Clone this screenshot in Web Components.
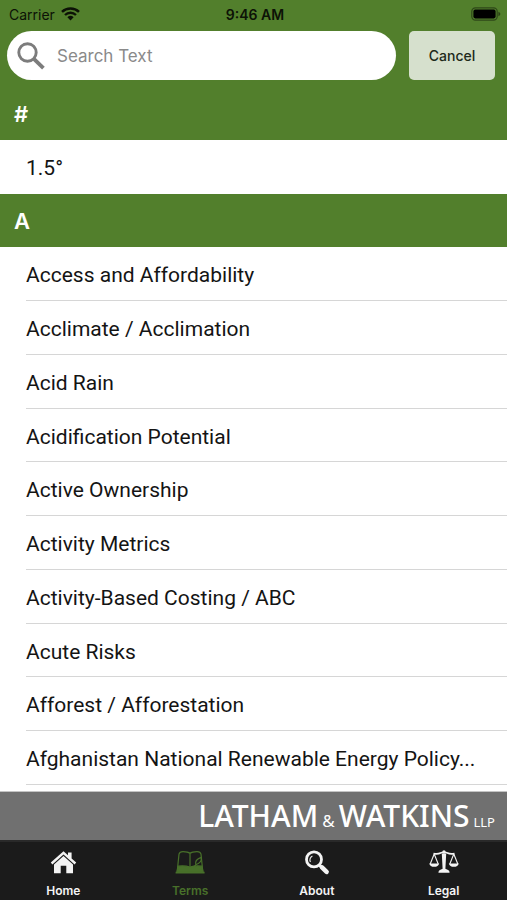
<!DOCTYPE html>
<html lang="en">
<head>
<meta charset="utf-8">
<meta name="viewport" content="width=device-width, initial-scale=1">
<title>Terms</title>
<style>
  html, body { margin: 0; height: 100%; }
  body {
    --green: #527f2c;
    --ink: #141414;
    font-family: Inter, "Liberation Sans", sans-serif;
    color: var(--ink);
  }
</style>
</head>
<body>
<glossary-app></glossary-app>

<script>
const define = (name, html, setup) => {
  const template = document.createElement('template');
  template.innerHTML = html;
  customElements.define(name, class extends HTMLElement {
    constructor() {
      super();
      this.attachShadow({ mode: 'open' }).append(template.content.cloneNode(true));
    }
    connectedCallback() { if (setup) setup(this, this.shadowRoot); }
  });
};

define('status-bar', `
  <style>
    :host { display: grid; grid-template-columns: 1fr auto 1fr; align-items: center; height: 28px; padding: 0 6px 0 9px; font-size: 14px; color: #0c1206; }
    .carrier { display: flex; align-items: center; gap: 6px; }
    time { font-weight: 600; }
    .battery { justify-self: end; }
    svg { display: block; }
  </style>
  <span class="carrier">Carrier
    <svg width="19" height="14" viewBox="0 0 19 14" aria-hidden="true">
      <path d="M1 4.8a12.3 12.3 0 0 1 17 0" fill="none" stroke="currentColor" stroke-width="2.5"/>
      <path d="M4 8a8 8 0 0 1 11 0" fill="none" stroke="currentColor" stroke-width="2.4"/>
      <path d="M6.4 10.2a4.6 4.6 0 0 1 6.2 0L9.5 13.4z" fill="currentColor"/>
    </svg>
  </span>
  <time>9:46 AM</time>
  <svg class="battery" width="30" height="14" viewBox="0 0 30 14" aria-hidden="true">
    <rect x=".8" y=".8" width="25.4" height="12.4" rx="3.6" fill="none" stroke="#0c1206" stroke-opacity=".5" stroke-width="1.2"/>
    <rect x="2.4" y="2.6" width="22.2" height="8.8" rx="1.8" fill="#000"/>
    <path d="M27.4 4.8q2 .7 2 2.2t-2 2.2z" fill="#0c1206" fill-opacity=".55"/>
  </svg>
`);

define('search-bar', `
  <style>
    :host { display: grid; grid-template-columns: 1fr 86px; gap: 13px; padding: 3px 12px 7px 7px; }
    label { display: flex; align-items: center; gap: 12px; height: 49px; padding: 0 20px 0 10px; border-radius: 25px; background: #fff; box-sizing: border-box; }
    svg { flex: none; display: block; }
    input { flex: 1; min-width: 0; border: 0; padding: 0; outline: 0; background: none; font: 17px/24px Inter, "Liberation Sans", sans-serif; color: #141414; }
    input::placeholder { color: #8a8a8a; opacity: 1; }
    button { border: 0; padding: 0; border-radius: 5px; background: #d6e0cd; color: #20291a; font: 500 14px/20px Inter, "Liberation Sans", sans-serif; }
  </style>
  <label>
    <svg width="28" height="28" viewBox="0 0 28 28" fill="none" stroke="#7c7c7c" aria-hidden="true">
      <circle cx="10.5" cy="10.5" r="8.7" stroke-width="2.9"/>
      <path d="M16.6 16.6l9.8 9.6" stroke-width="3.8"/>
    </svg>
    <input type="text" placeholder="Search Text" aria-label="Search Text">
  </label>
  <button type="button">Cancel</button>
`);

define('term-section', `
  <style>
    :host { display: block; }
    h2 { margin: 0; height: 53px; padding-left: 14px; background: var(--green); color: #fff; font-size: 22px; font-weight: 600; line-height: 54px; }
    ::slotted(term-row:nth-of-type(4n)) { --row: 53px; }
  </style>
  <h2></h2>
  <div role="list"><slot></slot></div>
`, (host, root) => { root.querySelector('h2').textContent = host.getAttribute('heading'); });

define('term-row', `
  <style>
    :host { display: block; padding-left: 26px; background: #fff; }
    a { display: block; height: var(--row, 54px); box-sizing: border-box; border-bottom: 1px solid #d6d6d6; font: 21px/56px Roboto, Inter, sans-serif; color: inherit; text-decoration: none; white-space: nowrap; overflow: hidden; text-overflow: ellipsis; }
    :host([plain]) a { border-color: transparent; }
  </style>
  <a href="#"><slot></slot></a>
`, host => host.setAttribute('role', 'listitem'));

define('brand-strip', `
  <style>
    :host { display: flex; justify-content: flex-end; align-items: baseline; height: 48px; padding: 0 12px 0 0; border-top: 1px solid #c4c4c4; background: #707070; color: #fff; font: 500 30px/48px "Noto Sans", "Open Sans", sans-serif; }
    .amp { font-size: 17px; font-weight: 400; line-height: 20px; padding: 0 4px; }
    .llp { font-size: 13px; font-weight: 400; line-height: 20px; padding-left: 4px; }
  </style>
  <span>LATHAM</span><span class="amp">&amp;</span><span>WATKINS</span><span class="llp">LLP</span>
`);

define('tab-item', `
  <style>
    :host { display: block; color: #f4f4f4; }
    :host([active]) { color: #48702a; }
    a { display: flex; flex-direction: column; align-items: center; gap: 6px; padding: 7px 0 1px; color: inherit; text-decoration: none; font-size: 12px; font-weight: 600; line-height: 16px; }
    ::slotted(svg) { display: block; }
  </style>
  <a href="#"><slot name="icon"></slot><span><slot></slot></span></a>
`);

define('tab-bar', `
  <style>
    :host { display: block; background: #1b1b1b; border-top: 2px solid #292929; }
    nav { display: grid; grid-template-columns: repeat(4, 1fr); }
  </style>
  <nav>
    <tab-item>
      <svg slot="icon" width="30" height="28" viewBox="0 0 30 28" fill="currentColor" aria-hidden="true">
        <path d="M15.5 2.2 20 6.2V3.6h3.6v5.8l4.6 4.2-1.6 1.8L15.5 5.400 4.400 15.400 2.800 13.600z"/>
        <path d="M15.500 7 25 15.600v8.600h-6.700v-7.400h-5.600v7.400H6v-8.600z"/>
      </svg>Home
    </tab-item>
    <tab-item active>
      <svg slot="icon" width="30" height="28" viewBox="0 0 30 28" fill="none" stroke="currentColor" stroke-width="1.2" aria-hidden="true">
        <path d="M3.200 17.200q6.500-.8 11.800.8 5.500-1.600 11.800-.8l1.400 6.200H1.800z" fill="currentColor"/>
        <path d="M.6 23.600h29" stroke-width="1.800"/>
        <path d="M2.200 22.500 4 5.200Q4.600 2.600 8 2.600q5 0 7 1.700 2-1.700 7-1.700 3.400 0 4 2.600l1.800 17.300M15 4.300v13.500"/>
        <path d="M20.800 15.800q-1.400-5 5.400-7.400 1 5-5.400 7.400l-2.600 3"/>
      </svg>Terms
    </tab-item>
    <tab-item>
      <svg slot="icon" width="30" height="28" viewBox="0 0 30 28" fill="none" stroke="currentColor" aria-hidden="true">
        <circle cx="12" cy="10.400" r="7.500" stroke-width="2.800"/>
        <path d="M8.400 13a4.400 4.400 0 0 1 2-6" stroke-width="1.100"/>
        <path d="M17 15.600l3 3" stroke-width="3"/>
        <path d="M20 18.400l4.600 4.400" stroke-width="4.600" stroke-linecap="round"/>
      </svg>About
    </tab-item>
    <tab-item>
      <svg slot="icon" width="30" height="28" viewBox="0 0 30 28" fill="none" stroke="currentColor" aria-hidden="true">
        <path d="M4.500 4.600q4.500.8 7-.6Q13 3.200 15 3.200t3.500.8q2.500 1.400 7 .6" stroke-width="1.600"/>
        <circle cx="15" cy="3" r="1.700" fill="currentColor" stroke="none"/>
        <path d="M12.800 4.600h4.400l-.8 15.200 2.700 1.300q1.500.5 1.500 2.700H9.400q0-2.200 1.500-2.700l2.700-1.300z" fill="currentColor" stroke="none"/>
        <path d="M5.200 5 1.200 15M5.200 5 9.200 15M24.800 5 20.800 15M24.800 5 28.800 15" stroke-width="1.100"/>
        <path d="M.2 14.400h10q-1 3.400-5 3.400t-5-3.400zM19.800 14.400h10q-1 3.400-5 3.400t-5-3.400z" fill="currentColor" stroke="none"/>
      </svg>Legal
    </tab-item>
  </nav>
`);

define('glossary-app', `
  <style>
    :host { display: flex; flex-direction: column; height: 100vh; background: #fff; }
    header { background: var(--green); }
    main { flex: 1; min-height: 0; overflow: hidden; }
  </style>
  <header>
    <status-bar></status-bar>
    <search-bar></search-bar>
  </header>
  <main>
    <term-section heading="#">
      <term-row plain>1.5°</term-row>
    </term-section>
    <term-section heading="A">
      <term-row>Access and Affordability</term-row>
      <term-row>Acclimate / Acclimation</term-row>
      <term-row>Acid Rain</term-row>
      <term-row>Acidification Potential</term-row>
      <term-row>Active Ownership</term-row>
      <term-row>Activity Metrics</term-row>
      <term-row>Activity-Based Costing / ABC</term-row>
      <term-row>Acute Risks</term-row>
      <term-row>Afforest / Afforestation</term-row>
      <term-row>Afghanistan National Renewable Energy Policy...</term-row>
    </term-section>
  </main>
  <brand-strip></brand-strip>
  <tab-bar></tab-bar>
`);
</script>
</body>
</html>
